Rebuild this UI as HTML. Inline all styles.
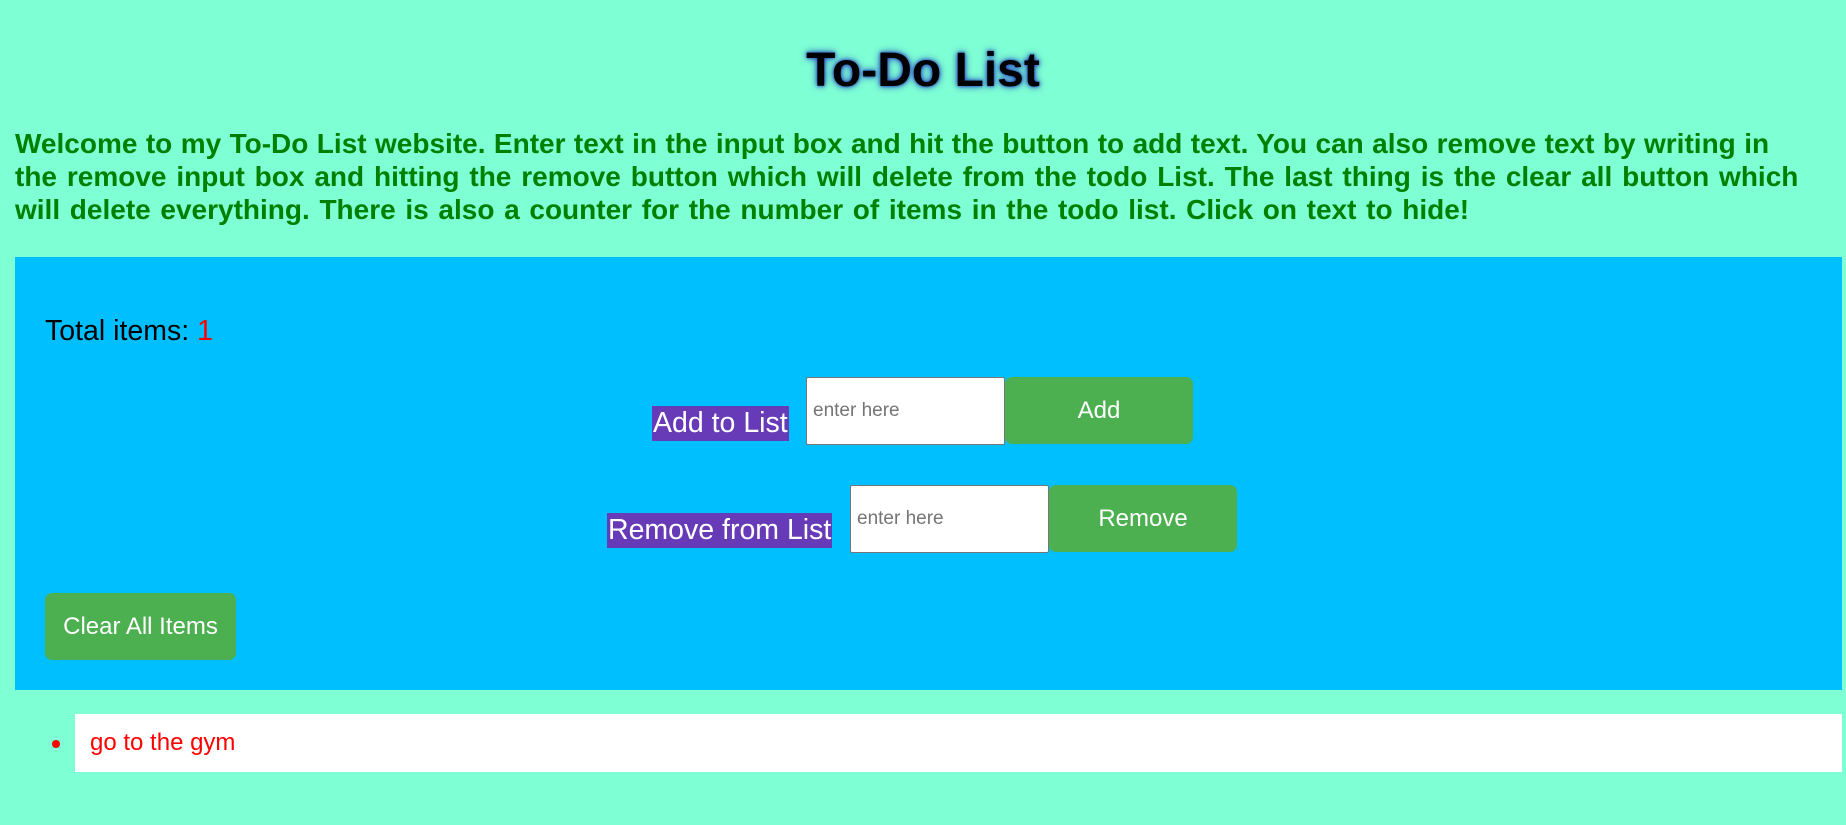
<!DOCTYPE html>
<html><head><meta charset="utf-8"><style>
body{margin:0;width:1846px;height:825px;background:#7fffd4;font-family:"Liberation Sans",Arial,sans-serif;position:relative;overflow:hidden}
.a{position:absolute;white-space:nowrap}
h1{position:absolute;left:0;width:1846px;top:43px;margin:0;text-align:center;font-size:48px;line-height:56px;font-weight:bold;color:#000;text-shadow:0 0 8px #2040c0,0 0 3px #2040c0}
p{position:absolute;left:15px;top:127px;margin:0;font-size:28px;line-height:33px;font-weight:bold;color:#008000;white-space:nowrap}
p span{display:block}
.box{position:absolute;left:15px;top:257px;width:1827px;height:433px;background:#00bfff}
.lbl{position:absolute;background:#673ab7;color:#fff;font-size:28.5px;line-height:35px;padding:0 1px}
.inp{position:absolute;background:#fff;border:1px solid #767676;box-sizing:border-box;border-radius:2px;font-size:19px;color:#757575;padding-left:6px;display:flex;align-items:center}
.btn{position:absolute;background:#4caf50;color:#fff;border-radius:7px;font-size:24px;display:flex;align-items:center;justify-content:center}
</style></head><body>
<h1>To-Do List</h1>
<p><span style="word-spacing:0.65px">Welcome to my To-Do List website. Enter text in the input box and hit the button to add text. You can also remove text by writing in</span><span style="word-spacing:2.1px">the remove input box and hitting the remove button which will delete from the todo List. The last thing is the clear all button which</span><span style="word-spacing:1.9px">will delete everything. There is also a counter for the number of items in the todo list. Click on text to hide!</span></p>
<div class="box"></div>
<div class="a" style="left:45px;top:314px;font-size:28.5px;line-height:34px">Total items: <span style="color:red">1</span></div>
<div class="lbl" style="left:652px;top:406px">Add to List</div>
<div class="inp" style="left:806px;top:377px;width:199px;height:68px">enter here</div>
<div class="btn" style="left:1005px;top:377px;width:188px;height:67px">Add</div>
<div class="lbl" style="left:607px;top:513px">Remove from List</div>
<div class="inp" style="left:850px;top:485px;width:199px;height:68px">enter here</div>
<div class="btn" style="left:1049px;top:485px;width:188px;height:67px">Remove</div>
<div class="btn" style="left:45px;top:593px;width:191px;height:67px">Clear All Items</div>
<div class="a" style="left:52px;top:740px;width:8px;height:8px;border-radius:50%;background:red"></div>
<div class="a" style="left:75px;top:714px;width:1767px;height:58px;background:#fff"></div>
<div class="a" style="left:90px;top:729px;font-size:24px;line-height:28px;color:red">go to the gym</div>
</body></html>
